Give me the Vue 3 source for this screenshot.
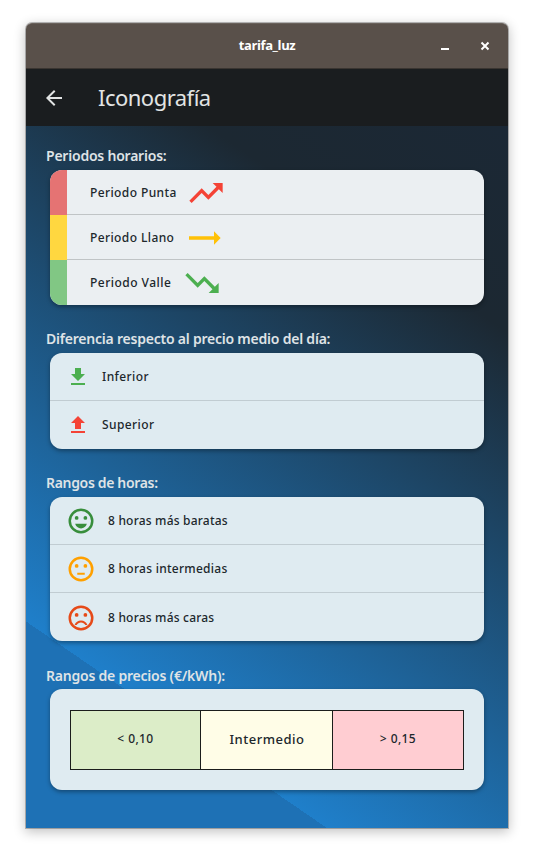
<script setup>
const periods = [
  { key: 'punta', label: 'Periodo Punta', path: 'M16 6l2.29 2.29-4.88 4.88-4-4L2 16.59 3.41 18l6-6 4 4 6.3-6.29L22 12V6z' },
  { key: 'llano', label: 'Periodo Llano', path: 'M22 12l-4-4v3H3v2h15v3z' },
  { key: 'valle', label: 'Periodo Valle', path: 'M16 18l2.29-2.29-4.88-4.88-4 4L2 7.41 3.41 6l6 6 4-4 6.3 6.29L22 12v6z' },
]
const differences = [
  { key: 'lower', label: 'Inferior', path: 'M19 9h-4V3H9v6H5l7 7 7-7zM5 18v2h14v-2H5z' },
  { key: 'higher', label: 'Superior', path: 'M9 16h6v-6h4l-7-7-7 7h4v6zm-4 2h14v2H5v-2z' },
]
const hours = [
  { key: 'cheap', label: '8 horas más baratas', mouth: 'M12 17.9c2.3 0 4-1.5 4.7-3.7H7.3c.7 2.2 2.4 3.7 4.7 3.7z' },
  { key: 'middle', label: '8 horas intermedias', mouth: 'M9 15h6v1.5H9z' },
  { key: 'dear', label: '8 horas más caras', mouth: 'M12 14c-2.33 0-4.32 1.45-5.12 3.5h1.67c.69-1.19 1.97-2 3.45-2s2.75.81 3.45 2h1.67c-.8-2.05-2.79-3.5-5.12-3.5z' },
]
const prices = [
  { key: 'low', label: '< 0,10' },
  { key: 'mid', label: 'Intermedio' },
  { key: 'high', label: '> 0,15' },
]
</script>

<template>
  <div class="desktop">
    <div class="window">
      <header class="titlebar">
        <span class="window-title">tarifa_luz</span>
        <div class="controls">
          <svg width="10" height="10" viewBox="0 0 10 10"><path d="M1 7h8v2H1z" fill="#fff" /></svg>
          <svg width="10" height="10" viewBox="0 0 10 10"><path d="M1.5 1.5l7 7M8.5 1.5l-7 7" stroke="#fff" stroke-width="2" /></svg>
        </div>
      </header>
      <nav class="appbar">
        <svg width="24" height="24" viewBox="0 0 24 24"><path d="M20 11H7.83l5.59-5.59L12 4l-8 8 8 8 1.41-1.41L7.83 13H20v-2z" fill="#e2e4e4" /></svg>
        <h1>Iconografía</h1>
      </nav>
      <main>
        <section>
          <h2>Periodos horarios:</h2>
          <div class="card periods">
            <div v-for="p in periods" :key="p.key" class="row" :class="p.key">
              <span class="band"></span>
              <span class="label">{{ p.label }}</span>
              <svg width="40" height="40" viewBox="0 0 24 24"><path :d="p.path" /></svg>
            </div>
          </div>
        </section>
        <section>
          <h2>Diferencia respecto al precio medio del día:</h2>
          <div class="card differences">
            <div v-for="d in differences" :key="d.key" class="row" :class="d.key">
              <svg width="24" height="24" viewBox="0 0 24 24"><path :d="d.path" /></svg>
              <span class="label">{{ d.label }}</span>
            </div>
          </div>
        </section>
        <section>
          <h2 class="tight">Rangos de horas:</h2>
          <div class="card hours">
            <div v-for="h in hours" :key="h.key" class="row" :class="h.key">
              <svg width="30" height="30" viewBox="0 0 24 24">
                <circle class="ring" cx="12" cy="12" r="9" />
                <circle cx="8.5" cy="9.5" r="1.5" />
                <circle cx="15.5" cy="9.5" r="1.5" />
                <path :d="h.mouth" />
              </svg>
              <span class="label">{{ h.label }}</span>
            </div>
          </div>
        </section>
        <section>
          <h2>Rangos de precios (€/kWh):</h2>
          <div class="card prices">
            <div class="scale">
              <div v-for="p in prices" :key="p.key" class="cell" :class="p.key"><span>{{ p.label }}</span></div>
            </div>
          </div>
        </section>
      </main>
    </div>
  </div>
</template>

<style>
body { margin: 0; background: #fff; }
</style>

<style scoped>
* { box-sizing: border-box; }
svg { display: block; flex: none; }
.desktop { width: 534px; height: 857px; padding: 23px 26px 29px; overflow: hidden; font-family: "Noto Sans", sans-serif; }
.window { height: 805px; border-radius: 6px 6px 0 0; box-shadow: 0 0 0 1px rgba(0,0,0,.25), 0 3px 12px 1px rgba(0,0,0,.24); display: flex; flex-direction: column; }
.titlebar { height: 46px; flex: none; background: #59504a; border-top: 1px solid #69615b; border-bottom: 1px solid #3a3531; border-radius: 6px 6px 0 0; display: grid; grid-template-columns: 1fr auto 1fr; align-items: center; }
.window-title { grid-column: 2; color: #fff; font-family: "Open Sans", sans-serif; font-size: 13px; font-weight: 700; line-height: 18px; letter-spacing: -.4px; padding-bottom: 2px; white-space: nowrap; }
.controls { display: flex; justify-content: flex-end; gap: 30px; padding: 0 18px 1px 0; }
.appbar { height: 57px; flex: none; background: #1a1d1f; display: flex; align-items: center; padding: 0 16px; gap: 32px; }
h1 { margin: 0; padding-bottom: 2px; font-size: 22px; font-weight: 400; line-height: 30px; color: #e2e4e4; letter-spacing: -.52px; white-space: nowrap; }
main { height: 702px; flex: none; padding: 20px 20px 0; display: flex; flex-direction: column; background: linear-gradient(34.47deg, #1e71b5 20%, #1f7fca 20%, #1c2832 80%, #1b2835 100%); }
section { height: 183px; flex: none; }
section:nth-child(2) { height: 144px; }
section:nth-child(3) { height: 193px; }
section:nth-child(4) { height: 123px; }
h2 { margin: 0 0 4px; height: 20px; font-size: 14px; line-height: 20px; font-weight: 600; letter-spacing: -.22px; color: #dfe3e6; white-space: nowrap; }
h2.tight { letter-spacing: -.33px; }
section:nth-child(4) h2 { margin-bottom: 3px; }
.card { margin: 0 4px; border-radius: 12px; overflow: hidden; background: #dfebf1; box-shadow: 0 2px 4px rgba(0,0,0,.35); }
.periods { background: #ebeff2; }
.row { height: 48px; display: flex; align-items: center; border-bottom: 1px solid #c1ccd2; }
.row:last-child { border-bottom-color: transparent; }
.periods .row { height: 45px; border-bottom: 0; box-shadow: inset 0 -1px rgba(0,0,0,.18); }
.periods .row:last-child { box-shadow: none; }
.band { width: 17px; height: 45px; flex: none; }
.label { font-size: 12px; line-height: 18px; font-weight: 500; color: #20272c; letter-spacing: .4px; white-space: nowrap; }
.periods .label { margin-left: 23px; }
.periods svg { margin-left: 10px; }
.punta .band { background: #e57373; }
.llano .band { background: #ffd740; }
.valle .band { background: #81c784; }
.punta svg { fill: #f44336; }
.llano svg { fill: #ffc107; }
.valle svg { fill: #4caf50; }
.punta .label { width: 86px; }
.llano .label { width: 84px; }
.valle .label { width: 82px; letter-spacing: .48px; }
.differences .row { padding-left: 16px; gap: 12px; }
.lower svg { fill: #4caf50; }
.higher svg { fill: #f44336; }
.hours .row { padding-left: 16px; gap: 12px; }
.hours .label { letter-spacing: .2px; }
.middle .label.label { letter-spacing: .27px; }
.hours .row.dear { border-bottom: 0; padding-top: 1px; }
.cheap svg { fill: #388e3c; }
.cheap .ring { stroke: #388e3c; }
.middle svg { fill: #ffa000; }
.middle .ring { stroke: #ffa000; }
.dear svg { fill: #e64a19; }
.dear .ring { stroke: #e64a19; }
.ring { fill: none; stroke-width: 2; }
.prices { height: 101px; padding: 21px 20px 20px; }
.scale { display: grid; grid-template-columns: 131px 132px 131px; height: 60px; }
.cell { display: flex; align-items: center; justify-content: center; padding-bottom: 3px; border: 1px solid #1b1d1b; border-left-width: 0; font-size: 12px; font-weight: 500; letter-spacing: .4px; color: #20272c; }
.cell.low { background: #dcedc8; border-left-width: 1px; }
.cell.mid { background: #fffde7; font-size: 13px; letter-spacing: .5px; padding: 0 0 2px 1px; }
.cell.high { background: #ffcdd2; }
</style>
